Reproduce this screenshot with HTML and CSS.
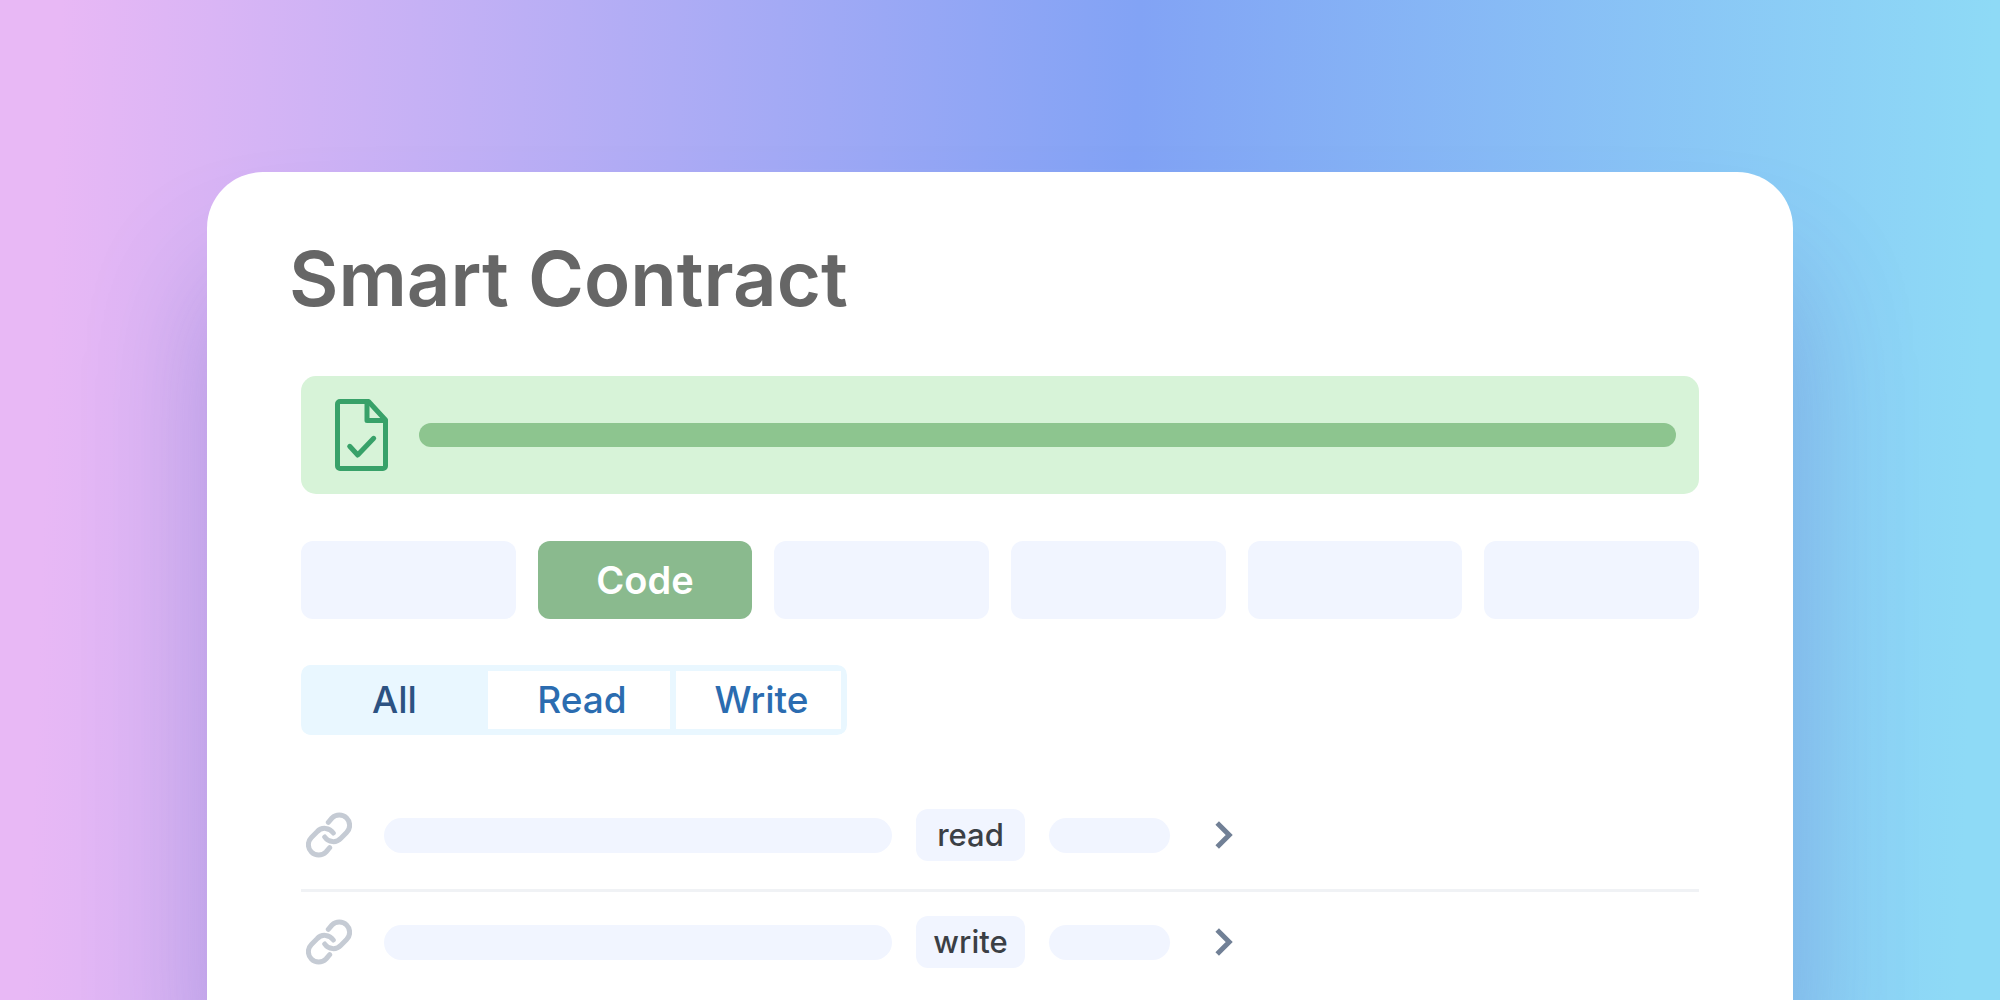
FILE: index.html
```html
<!DOCTYPE html>
<html lang="en">
<head>
<meta charset="utf-8">
<title>Smart Contract</title>
<link rel="stylesheet" href="styles.css">
</head>
<body>

<main class="card">
  <h1>Smart Contract</h1>

  <div class="content">
    <div class="banner">
      <svg class="file-icon" viewBox="0 0 53 72" aria-hidden="true">
        <path d="M2.5 5a2.5 2.5 0 0 1 2.5-2.5H33.500L50.500 21V67a2.5 2.5 0 0 1-2.5 2.5H5a2.5 2.5 0 0 1-2.5-2.5Z"/>
        <path d="M32 3V21.5H50"/>
        <path d="M14.7 47.3L22.7 56L38.7 39.3"/>
      </svg>
      <div class="banner-bar"></div>
    </div>

    <nav class="tabs">
      <button class="tab" aria-label="Tab 1"></button>
      <button class="tab active">Code</button>
      <button class="tab" aria-label="Tab 3"></button>
      <button class="tab" aria-label="Tab 4"></button>
      <button class="tab" aria-label="Tab 5"></button>
      <button class="tab" aria-label="Tab 6"></button>
    </nav>

    <div class="filter">
      <button class="active">All</button>
      <button>Read</button>
      <button>Write</button>
    </div>

    <ul class="methods">
      <li>
        <svg class="link-icon" viewBox="0 0 46 46" aria-hidden="true">
          <path d="M22.3 10.3L26 6A10.3 10.3 0 0 1 40.6 20.6L34.9 26.3A10.3 10.3 0 0 1 18.7 25"/>
          <path d="M22.3 10.3L26 6A10.3 10.3 0 0 1 40.6 20.6L34.9 26.3A10.3 10.3 0 0 1 18.7 25" transform="rotate(180 23 23)"/>
        </svg>
        <span class="pill name"></span>
        <span class="badge">read</span>
        <span class="pill args"></span>
        <svg class="chevron" viewBox="0 0 18 30" aria-hidden="true"><path d="M2.2 3L14.2 15L2.2 27"/></svg>
      </li>
      <li>
        <svg class="link-icon" viewBox="0 0 46 46" aria-hidden="true">
          <path d="M22.3 10.3L26 6A10.3 10.3 0 0 1 40.6 20.6L34.9 26.3A10.3 10.3 0 0 1 18.7 25"/>
          <path d="M22.3 10.3L26 6A10.3 10.3 0 0 1 40.6 20.6L34.9 26.3A10.3 10.3 0 0 1 18.7 25" transform="rotate(180 23 23)"/>
        </svg>
        <span class="pill name"></span>
        <span class="badge">write</span>
        <span class="pill args"></span>
        <svg class="chevron" viewBox="0 0 18 30" aria-hidden="true"><path d="M2.2 3L14.2 15L2.2 27"/></svg>
      </li>
    </ul>
  </div>
</main>

</body>
</html>
```

FILE: styles.css
```css
* { box-sizing: border-box; }
body {
  margin: 0;
  min-height: 100vh;
  padding-top: 172px;
  display: flex;
  justify-content: center;
  font-family: Inter, "Liberation Sans", sans-serif;
  background: linear-gradient(92deg, #e8b8f5 3%, #82a3f5 56%, #8edaf6 98%);
}
button { border: 0; padding: 0; font: inherit; cursor: pointer; }

.card {
  width: 79.3%;
  padding: 62px 82px 0;
  background: #fff;
  border-radius: 56px 56px 0 0;
  box-shadow: 0 100px 120px rgba(85, 85, 175, 0.3);
}
h1 { margin: 0; font-size: 76px; line-height: 88px; font-weight: 600; color: #666; }
.content { margin: 54px 12px 0; }

/* Verified banner */
.banner {
  display: flex;
  align-items: center;
  gap: 31px;
  height: 118px;
  padding: 0 23px 0 34px;
  background: #d7f3d8;
  border-radius: 15px;
}
.file-icon { flex: none; width: 53px; height: 72px; fill: none; stroke: #38a169; stroke-width: 5; stroke-linecap: round; stroke-linejoin: round; }
.banner-bar { flex: 1; height: 24px; border-radius: 12px; background: #8dc58f; }

.tabs { display: grid; grid-template-columns: repeat(6, 1fr); gap: 22px; margin-top: 47px; }
.tab { height: 78px; border-radius: 12px; background: #f1f5ff; font-size: 38px; font-weight: 600; color: #fff; }
.tab.active { background: #8aba8e; }

/* All / Read / Write switch */
.filter {
  display: grid;
  grid-template-columns: 187px 188px 171px;
  width: max-content;
  height: 70px;
  margin-top: 46px;
  border-radius: 10px;
  overflow: hidden;
}
.filter button {
  padding: 0 0 2px 6px;
  border: 6px solid #e9f7ff;
  border-left: 0;
  background: #fff;
  color: #2b6cb0;
  font-size: 37px;
  font-weight: 500;
}
.filter .active { background: #e9f7ff; color: #2c5282; }

/* Contract methods */
.methods { list-style: none; margin: 50px 0 0; padding: 0; }
.methods li { display: flex; align-items: center; gap: 24px; padding: 24px 5px 28px; }
.methods li + li { border-top: 3px solid #f0f2f5; }
.link-icon { flex: none; width: 46px; height: 46px; margin-right: 8px; fill: none; stroke: #c5cbd4; stroke-width: 5; stroke-linecap: round; stroke-linejoin: round; }
.pill { height: 35px; border-radius: 18px; background: #f1f5ff; }
.name { width: 508px; }
.args { width: 121px; }
.badge { width: 109px; height: 52px; border-radius: 12px; background: #f1f5ff; color: #3b3f45; font-size: 31px; line-height: 52px; font-weight: 500; text-align: center; }
.chevron { width: 18px; height: 30px; margin-left: 21px; fill: none; stroke: #718096; stroke-width: 5; }
```
